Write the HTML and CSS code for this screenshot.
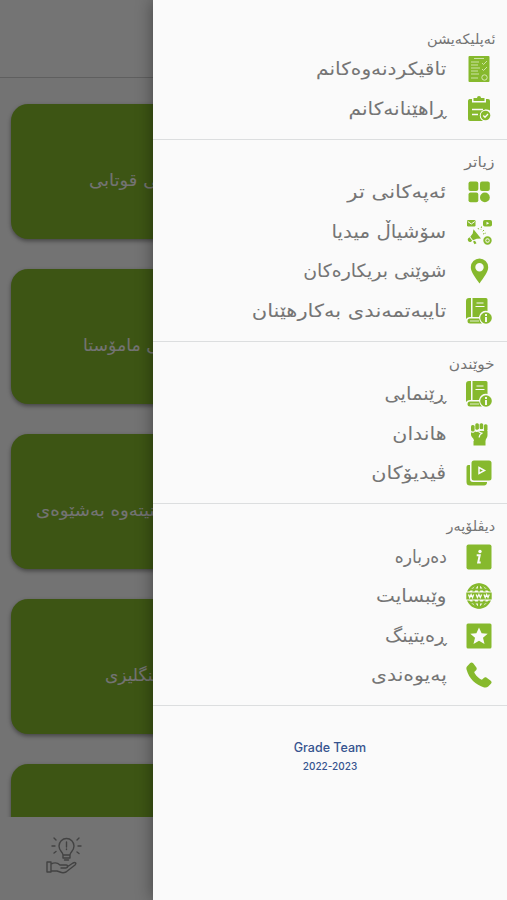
FILE: index.html
```html
<!DOCTYPE html>
<html lang="ckb" dir="rtl">
<head>
    <meta charset="UTF-8">
    <meta name="viewport" content="width=device-width, initial-scale=1.0">
    <title>Grade</title>
    <link rel="stylesheet" href="styles.css">
</head>
<body>
    <div class="home">
        <header class="topbar"></header>
        <main class="cards">
            <div class="card"><span class="c1">بەشی قوتابی</span></div>
            <div class="card"><span class="c2">بەشی مامۆستا</span></div>
            <div class="card"><span class="c3">ببینیتەوە بەشێوەی</span></div>
            <div class="card"><span class="c4">ئینگلیزی</span></div>
            <div class="card"></div>
        </main>
        <nav class="bottombar">
            <svg class="tip" viewBox="0 0 36 38" fill="none" stroke="#909090" stroke-width="1.4" stroke-linecap="round" stroke-linejoin="round">
                <path d="M17 19c0-3-4-4-4-9a7.500 7.500 0 0 1 15 0c0 5-4 6-4 9zM17 19v3h7v-3M18.500 24h4M20.500 6v5M20.500 13v.5"/>
                <path d="M8 2l2 2M6 10h3M8 17l2-1.500M31 4l2-2M32 10h3M31 16l2 1.500"/>
                <path d="M1 26h4v10H1zM5 28c4-2 7-1 9 1h6c3 0 2 3 0 3h-5M21 31l6-4c2-1 4 0 2 2l-9 7c-2 1-4 1-6 0l-3-1H5"/>
            </svg>
        </nav>
    </div>
    <div class="scrim"></div>

    <aside class="drawer">
        <section>
            <h2><span class="t1">ئەپلیکەیشن</span></h2>
            <a class="row">
                <svg viewBox="0 0 26 26"><rect x="2.500" width="21" height="26" rx="1" fill="#86b92d"/><path d="M8 2.500h10M5 6h8M5 9h7M5 12h9M5 15h7M5 18h8M5 22h7M16 7l1.500 1.500L21 5M16 13l1.500 1.500L21 11" fill="none" stroke="#d5e8b4" stroke-width=".9"/><circle cx="18.500" cy="21.500" r="2.700" fill="none" stroke="#d5e8b4"/></svg>
                <span class="r1">تاقیکردنەوەکانم</span>
            </a>
            <a class="row">
                <svg viewBox="0 0 26 26"><path fill="#86b92d" d="M3.500 3H6v3.500h14V3h2a2 2 0 0 1 2 2v9.500a6 6 0 0 0-7 10.500H4a2 2 0 0 1-2-2V5a2 2 0 0 1 1.500-2zM7.500 2H11a2 2 0 0 1 4 0h3.500v3h-11z"/><path d="M6 13.500h11M6 18.500h6" stroke="#fafafa" stroke-width="1.500"/><circle cx="19.500" cy="19.500" r="5.700" fill="#fafafa"/><circle cx="19.500" cy="19.500" r="4.800" fill="#86b92d"/><path d="M17.300 19.500l1.700 1.700 3-3.200" fill="none" stroke="#fafafa" stroke-width="1.300"/></svg>
                <span class="r2">ڕاهێنانەکانم</span>
            </a>
        </section>

        <section>
            <h2><span class="t2">زیاتر</span></h2>
            <a class="row">
                <svg viewBox="0 0 26 26" fill="#86b92d"><rect x="2.500" y="2.500" width="9.800" height="9.500" rx="2"/><rect x="14" y="2.500" width="9.800" height="9.500" rx="2"/><rect x="2.500" y="13.500" width="9.800" height="9.800" rx="2"/><circle cx="18.900" cy="18.400" r="4.900"/></svg>
                <span class="r3">ئەپەکانی تر</span>
            </a>
            <a class="row">
                <svg viewBox="0 0 26 26" fill="#86b92d"><rect x="1" y="1" width="8.500" height="6.500" rx="1.200"/><path d="M1.800 2.500l3.500 2.500 3.500-2.500" fill="none" stroke="#fafafa"/><rect x="17" y="1" width="9" height="6.500" rx="1.800"/><path d="M20.500 2.800v3l2.700-1.500z" fill="#fafafa"/><path d="M7.500 10.200l7.500 9.300-4.300.3-3.700 1.400-2.700-3.400 2.400-3.200zM3.500 18.200l2.700 3.500-1.500 1.200c-2 .6-3.700-1.600-2.700-3.400zM7 22.500l2-.8 1.500 2.600-2 1z"/><path d="M12 9l1 2M15.500 7.500l-.5 3M18 11l-2 2M17 15l3-1" fill="none" stroke="#86b92d" stroke-dasharray="1.500 1"/><circle cx="21.500" cy="21.500" r="3.200" fill="none" stroke="#86b92d" stroke-width="2"/><circle cx="21.500" cy="21.500" r="1.300"/></svg>
                <span class="r4">سۆشیاڵ میدیا</span>
            </a>
            <a class="row">
                <svg viewBox="0 0 26 26"><path fill="#86b92d" fill-rule="evenodd" d="M13.500.5a8.700 8.700 0 0 1 8.700 8.700c0 5-4.700 10.300-8.700 16.300C9.500 19.500 4.800 14.200 4.800 9.200A8.700 8.700 0 0 1 13.500.5zm0 4.500a4.200 4.200 0 1 0 0 8.400 4.200 4.200 0 0 0 0-8.400z"/></svg>
                <span class="r5">شوێنی بریکارەکان</span>
            </a>
            <a class="row">
                <svg viewBox="0 0 26 26"><path fill="#86b92d" d="M3 0h2v19a5 5 0 0 0-5 2V3a3 3 0 0 1 3-3zM6.500 0H20a1.500 1.500 0 0 1 1.500 1.500V13A7 7 0 0 0 13 19H6.500zM4 20.500h9.500a8 8 0 0 0 2.500 5H4a2.500 2.500 0 0 1 0-5z"/><path d="M10.500 5h7M9.500 8.500h9" stroke="#fafafa" stroke-width="1.200"/><path d="M4 23h9" stroke="#fafafa" stroke-width=".8"/><circle cx="20" cy="20" r="6.700" fill="#fafafa"/><circle cx="20" cy="20" r="5.800" fill="#86b92d"/><path d="M20 16v2M20 19v5" stroke="#fafafa" stroke-width="1.900"/></svg>
                <span class="r6">تایبەتمەندی بەکارهێنان</span>
            </a>
        </section>

        <section>
            <h2><span class="t3">خوێندن</span></h2>
            <a class="row">
                <svg viewBox="0 0 26 26"><path fill="#86b92d" d="M3 0h2v19a5 5 0 0 0-5 2V3a3 3 0 0 1 3-3zM6.500 0H20a1.500 1.500 0 0 1 1.500 1.500V13A7 7 0 0 0 13 19H6.500zM4 20.500h9.500a8 8 0 0 0 2.500 5H4a2.500 2.500 0 0 1 0-5z"/><path d="M10.500 5h7M9.500 8.500h9" stroke="#fafafa" stroke-width="1.200"/><path d="M4 23h9" stroke="#fafafa" stroke-width=".8"/><circle cx="20" cy="20" r="6.700" fill="#fafafa"/><circle cx="20" cy="20" r="5.800" fill="#86b92d"/><path d="M20 16v2M20 19v5" stroke="#fafafa" stroke-width="1.900"/></svg>
                <span class="r7">ڕێنمایی</span>
            </a>
            <a class="row">
                <svg viewBox="0 0 26 26" fill="#86b92d"><rect x="5" y="4" width="3.600" height="6.500" rx="1.500"/><rect x="9.300" y="2.300" width="3.600" height="6.500" rx="1.500"/><rect x="13.600" y="2.300" width="3.600" height="6" rx="1.500"/><rect x="17.900" y="3.300" width="3.600" height="7" rx="1.500"/><path d="M5 11.300c2 1 3 .6 4-.8 1.500.7 3 .5 4-.8h5l3.500.3v4.300c0 2.500-2 3.500-2 6H8c0-3.500-3-4-3-6.500zM7.500 20h12v4.500h-12z"/><path d="M18 9.200h-5.500c0 3 4 2.800 4 2.800-2.500 1-3.300 2.300-3.300 4.500" fill="none" stroke="#fafafa" stroke-width="1.200"/></svg>
                <span class="r8">هاندان</span>
            </a>
            <a class="row">
                <svg viewBox="0 0 26 26" fill="#86b92d"><path d="M2 5h2v14a3 3 0 0 0 3 3h14a3 3 0 0 1-3 3.500H4a3.500 3.500 0 0 1-3.500-3.500V7A2 2 0 0 1 2 5z"/><rect x="5.500" y=".5" width="20" height="20" rx="2.500"/><path d="M13 7.500l5.500 3-5.500 3z" fill="none" stroke="#fafafa" stroke-width="1.500"/></svg>
                <span class="r9">ڤیدیۆکان</span>
            </a>
        </section>

        <section>
            <h2><span class="t4">دیڤلۆپەر</span></h2>
            <a class="row">
                <svg viewBox="0 0 26 26"><rect x=".5" y=".5" width="25" height="25" rx="2" fill="#86b92d"/><circle cx="14" cy="7.500" r="1.700" fill="#fafafa"/><path d="M10.700 11.300h3l-1.500 7.200h2.500" fill="none" stroke="#fafafa" stroke-width="2"/></svg>
                <span class="r10">دەربارە</span>
            </a>
            <a class="row">
                <svg viewBox="0 0 26 26" fill="none" stroke="#86b92d" stroke-width="2.200"><circle cx="13" cy="13" r="11.600"/><ellipse cx="13" cy="13" rx="6" ry="11.500"/><path d="M13 1v24M3 6.500h20M3 19.500h20"/><path d="M0 13h26" stroke="#fafafa" stroke-width="9"/><path d="M.3 13h25.400" stroke-width="7"/><path d="M2.500 11.500l1.200 3 1.400-3 1.400 3 1.200-3M10.200 11.500l1.200 3 1.500-3 1.400 3 1.300-3M18 11.500l1.200 3 1.400-3 1.400 3 1.300-3" stroke="#fafafa" stroke-width="1.300"/></svg>
                <span class="r11">وێبسایت</span>
            </a>
            <a class="row">
                <svg viewBox="0 0 26 26"><rect x=".5" y=".5" width="25" height="25" rx="1.500" fill="#86b92d"/><path fill="#fafafa" d="M13 4.500l2.600 5.700 6.100.5-4.700 4 1.500 6.300-5.500-3.200L7.500 21 9 14.700l-4.700-4 6.100-.5z"/></svg>
                <span class="r12">ڕەیتینگ</span>
            </a>
            <a class="row">
                <svg viewBox="0 0 26 26"><path fill="#86b92d" d="M1.200 4.200L4 1.200c1-1 2.300-.9 3.200.1l3 4c.8 1 .7 2-.1 2.900L8.200 10c1 3 4.500 6.500 7.700 7.800l1.900-1.900c.8-.8 1.900-.9 2.900-.2l4 3c1.100.8 1.200 2.200.2 3.100l-2.700 2.700c-1 1-2.500 1.300-4 .9C9.500 23 3 16.500.7 8 .2 6.600.2 5.300 1.200 4.200z"/></svg>
                <span class="r13">پەیوەندی</span>
            </a>
        </section>

        <footer dir="ltr">
            <div class="team">Grade Team</div>
            <div class="years">2022-2023</div>
        </footer>
    </aside>
</body>
</html>
```

FILE: styles.css
```css
* { box-sizing: border-box; }
body { margin: 0; height: 900px; overflow: hidden; position: relative; background: #fafafa; font-family: "DejaVu Sans", sans-serif; }

.home { height: 900px; display: flex; flex-direction: column; }
.topbar { height: 78px; flex: none; background: #fdfdfd; border-bottom: 1px solid #d0d0d0; }
.cards { flex: 1; overflow: hidden; padding: 26px 11px 0; display: flex; flex-direction: column; gap: 30px; }
.card { height: 135px; flex: none; border-radius: 17px; background: #86b92d; box-shadow: 0 2px 4px rgba(0, 0, 0, .4); direction: ltr; padding-top: 64px; color: #fafafa; font-size: 17px; line-height: 24px; white-space: nowrap; }
.card span { display: inline-block; direction: rtl; transform-origin: left center; }
.c1 { margin-left: 78px; transform: scaleX(1.06); }
.c2 { margin-left: 72px; transform: scaleX(1.02); }
.c3 { margin-left: 25px; transform: scaleX(1.07); }
.c4 { margin-left: 94px; }
.bottombar { height: 83px; flex: none; direction: ltr; padding: 19px 0 0 46px; }
.tip { width: 36px; height: 38px; display: block; }

.scrim { position: absolute; inset: 0; background: rgba(0, 0, 0, .54); }

.drawer { position: absolute; top: 0; right: 0; width: 354px; height: 900px; padding-top: 16.5px; background: #fafafa; box-shadow: 0 0 16px rgba(0, 0, 0, .4); color: #757575; }
.drawer section { padding: 11px 0 10px; border-bottom: 1px solid #dcdedf; }
.drawer h2 { margin: 0; height: 22px; padding-right: 12px; font-size: 14px; font-weight: normal; line-height: 22px; }
.drawer h2 span, .row span { display: inline-block; transform-origin: right center; white-space: nowrap; }
.row { display: flex; align-items: center; gap: 19.5px; height: 39.5px; padding-right: 15px; font-size: 18px; line-height: 30px; }
.row svg { width: 26px; height: 26px; flex: none; }

.drawer .t1 { transform: scaleX(1.03); }
.drawer .t2 { transform: scaleX(1.14); }
.drawer .t3 { transform: scaleX(1.1); }
.drawer .t4 { transform: scaleX(1.03); }
.r1, .r2 { transform: scaleX(1.12); }
.r3 { transform: scaleX(1.175); }
.r4 { transform: scaleX(1.1); }
.r5 { transform: scaleX(1.05); }
.r6 { transform: scaleX(1.17); }
.r7 { transform: scaleX(1.08); }
.r8 { transform: scaleX(1.14); }
.r9 { transform: scaleX(1.15); }
.r10 { transform: scaleX(.95); }
.r11 { transform: scaleX(1.11); }
.r12 { transform: scaleX(1.07); }
.r13 { transform: scaleX(1.135); }

footer { padding-top: 32px; text-align: center; color: #36548f; font-family: Inter, sans-serif; }
.team { font-size: 12.5px; line-height: 20px; font-weight: 500; }
.years { font-size: 10px; line-height: 16px; font-weight: 500; }
```
